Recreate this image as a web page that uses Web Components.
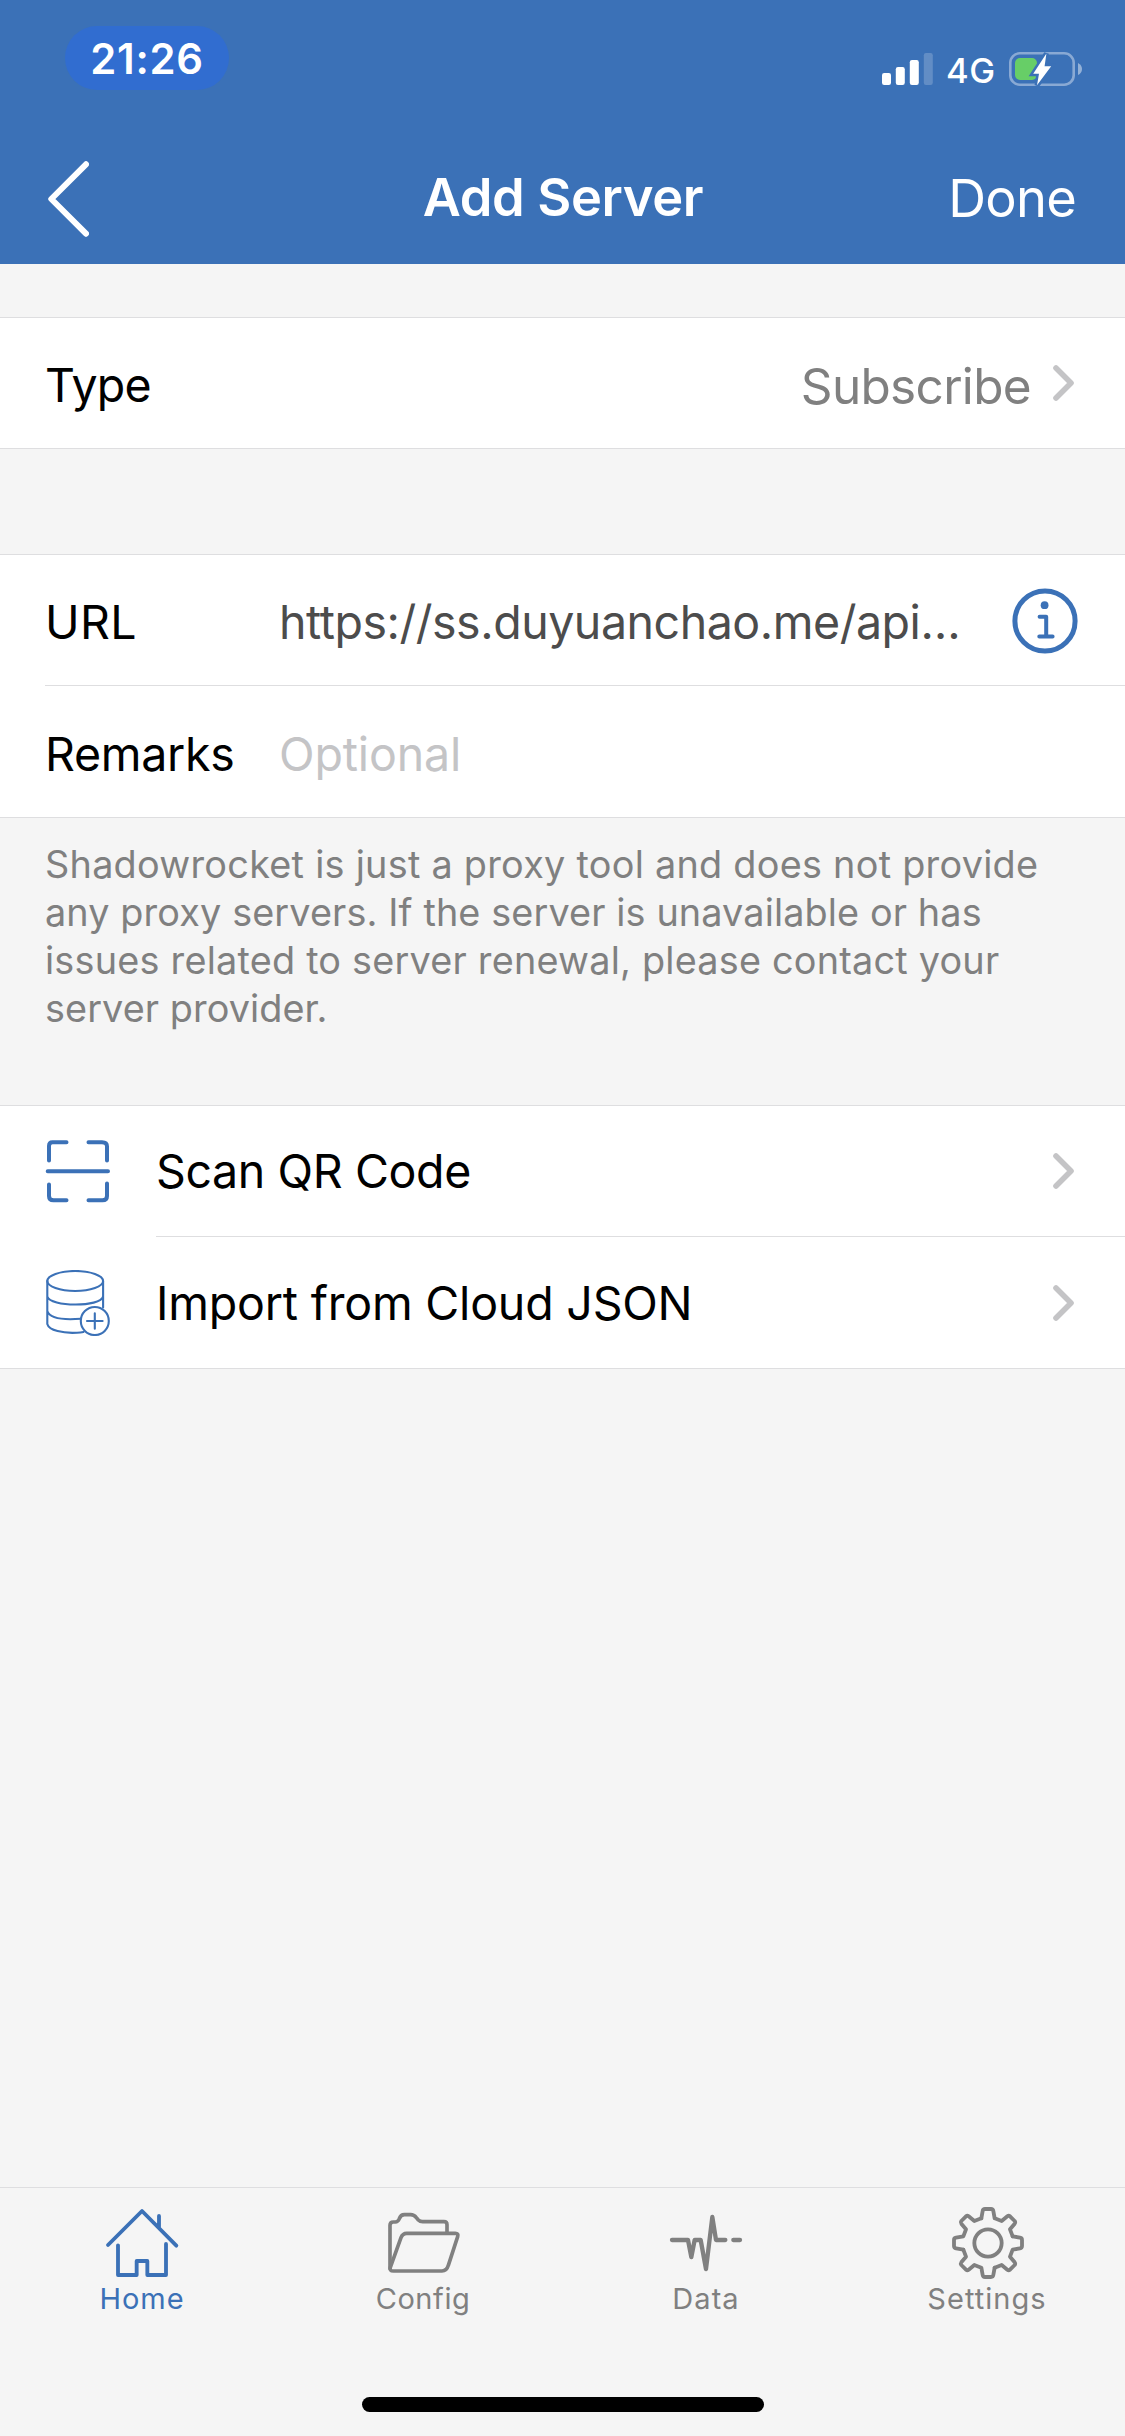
<!DOCTYPE html>
<html lang="en">
<head>
<meta charset="utf-8">
<title>Add Server</title>
<style>
  html, body { margin: 0; height: 2436px; }
  body {
    width: 1125px; overflow: hidden; background: #f5f5f5;
    font-family: Inter, "Liberation Sans", sans-serif; color: #000;
    --accent: #3b71b7; --muted: #808080; --line: #dedee0;
  }
</style>
</head>
<body>
<app-screen></app-screen>
<script>
const define = (name, html) => customElements.define(name, class extends HTMLElement {
  constructor() {
    super();
    this.attachShadow({ mode: 'open' }).innerHTML = html;
  }
});

/* Text with its own tracking: <t-x ls="-0.4">…</t-x> */
customElements.define('t-x', class extends HTMLElement {
  constructor() {
    super();
    this.attachShadow({ mode: 'open' }).innerHTML =
      '<style>:host{display:block;white-space:nowrap}</style><slot></slot>';
  }
  connectedCallback() { this.style.letterSpacing = (this.getAttribute('ls') || 0) + 'px'; }
});

const tooth = 'M-20 -74L-16 -96Q-15 -102 -9 -102H9Q15 -102 16 -96L20 -74L41 -66L58 -80Q62 -83 66 -80L80 -66Q83 -62 80 -58L66 -41L74 -20';
const icons = {
  back: `<svg width="41" height="76" viewBox="0 0 41 76"><path d="M38 3.3L3.3 38L38 72.7" stroke-width="6"/></svg>`,
  chevron: `<svg width="21" height="36" viewBox="0 0 21 36"><path d="M3 3L18 18L3 33" stroke-width="5.6"/></svg>`,
  signal: `<svg width="51" height="32" viewBox="0 0 51 32"><g fill="#fff" stroke="none"><rect y="20" width="9" height="12" rx="2.2"/><rect x="13.8" y="14" width="9" height="18" rx="2.2"/><rect x="27.8" y="7" width="9" height="25" rx="2.2"/><rect x="41.8" width="9" height="32" rx="2.2" opacity=".2"/></g></svg>`,
  battery: `<svg width="73" height="34" viewBox="0 0 73 34"><rect x="1.3" y="1.3" width="63.4" height="31.4" rx="9.5" stroke="#fff" stroke-opacity=".4" stroke-width="2.6"/><path d="M69 11Q73 13 73 17T69 23Z" fill="#fff" fill-opacity=".45" stroke="none"/><rect x="6" y="6" width="22" height="22" rx="5" fill="#67ce67" stroke="none"/><path d="M37.4 1.5L24.2 21.7H30L28 33.3L42.2 14.3H35.6Z" fill="#fff" stroke="#3b71b7" stroke-width="5" stroke-linejoin="miter" paint-order="stroke"/></svg>`,
  info: `<svg width="66" height="66" viewBox="0 0 66 66"><circle cx="33" cy="33" r="30.1" stroke-width="5"/><circle cx="32.6" cy="17.2" r="3.9" fill="currentColor" stroke="none"/><path d="M27.6 28.8H34.2V48.6M27.3 48.6H40.6" stroke-width="4"/></svg>`,
  scan: `<svg width="65" height="63" viewBox="0 0 65 63"><g stroke-width="4"><path d="M4 20.5V6Q4 2.3 7.5 2.3H21.5M43.5 2.3H57Q62 2.3 62 6.5V20.5M62 43.5V56Q62 60.3 57.5 60.3H43.5M21.5 60.3H8.5Q4 60.3 4 56V44.5M2.7 31.3H63"/></g></svg>`,
  database: `<svg width="65" height="66" viewBox="0 0 65 66"><g stroke-width="2.1"><ellipse cx="30.2" cy="11" rx="27.9" ry="10"/><path d="M2.3 11V54C4 60.500 18 63.500 32 62.700Q35.500 62.600 38.500 62M58.100 11V37.500M2.300 26.500C5 37 55.500 37.500 58.100 26.500M2.300 41C5 49 20 50 36 48.700"/><circle cx="49.800" cy="51" r="14"/><path d="M42 51H57.600M49.800 43.200V58.800"/></g></svg>`,
  home: `<svg width="84" height="80" viewBox="117 60 252 240"><g stroke-width="11.5"><path d="M144 195L246 93L349 197M297 108V144M174 196V285H230V243H262V285H318V192"/></g></svg>`,
  config: `<svg width="84" height="80" viewBox="963 60 252 240"><g stroke-width="11"><path d="M990 266V136Q990 126 1000 126H1006Q1014 126 1018 116Q1022 104 1033 104H1052Q1062 104 1069 113L1075 120Q1080 125 1088 125H1152Q1161 125 1161 134V158"/><path d="M1040 160H1186Q1196 160 1193 170L1165 256Q1160 273 1146 273H1000Q988 273 991 262L1023 173Q1028 160 1040 160Z"/></g></svg>`,
  data: `<svg width="84" height="80" viewBox="129 60 252 240"><g stroke-width="13"><path d="M156 180H204L214 231L224 180H242L258 267L277 111L288 180H316M340 180H360"/></g></svg>`,
  settings: `<svg width="84" height="80" viewBox="975 60 252 240"><g stroke-width="11.500" transform="translate(1104 189)"><circle r="41"/>${[0, 90, 180, 270].map(a => `<path d="${tooth}" transform="rotate(${a})"/>`).join('')}</g></svg>`
};

customElements.define('ui-icon', class extends HTMLElement {
  connectedCallback() {
    this.attachShadow({ mode: 'open' }).innerHTML =
      `<style>:host{display:block;flex:none}svg{display:block;fill:none;stroke:currentColor;stroke-linecap:round;stroke-linejoin:round}</style>${icons[this.getAttribute('name')]}`;
  }
});

define('status-bar', `
<style>
  :host { display: flex; justify-content: space-between; height: 132px; box-sizing: border-box; padding: 26px 43px 0 65px; }
  .time { width: 164px; height: 64px; border-radius: 32px; background: #316dd0; display: flex; justify-content: center;
          font-size: 41.8px; font-weight: 600; line-height: 66px; }
  .right { display: flex; height: 34px; margin-top: 26px; }
  .net { font-size: 34.6px; font-weight: 500; line-height: 36px; margin: 0 13.500px 0 12.500px; }
  .sig { margin-top: 1px; }
</style>
<div class="time"><t-x ls="0.73">21:26</t-x></div>
<div class="right"><ui-icon class="sig" name="signal"></ui-icon><t-x class="net" ls="0.5">4G</t-x><ui-icon name="battery"></ui-icon></div>`);

define('nav-bar', `
<style>
  :host { display: grid; grid-template-columns: 1fr auto 1fr; align-items: center; height: 132px; box-sizing: border-box;
          padding: 0 49px 0 48px; font-size: 52.4px; line-height: 132px; }
  .back { margin-top: 1px; }
  .title { font-weight: 600; margin: -2px -1px 0 1px; }
  .done { justify-self: end; }
</style>
<ui-icon class="back" name="back"></ui-icon>
<t-x class="title" ls="-0.37"><slot name="title"></slot></t-x>
<t-x class="done" ls="-0.73"><slot name="action"></slot></t-x>`);

define('list-group', `
<style>
  :host { display: flex; flex-direction: column; background: #fff; box-shadow: inset 0 1px var(--line), inset 0 -1px var(--line); }
</style><slot></slot>`);

define('list-row', `
<style>
  :host { display: flex; align-items: center; height: 132px; box-sizing: border-box; padding: 0 51px 0 45px;
          font-size: 46.5px; line-height: 60px;
          background: linear-gradient(var(--line), var(--line)) right bottom / calc(100% - var(--inset, 0px)) 1px no-repeat; }
  .label { width: var(--label, auto); flex: none; }
  .value { flex: 1; display: flex; min-width: 0; }
</style>
<slot name="icon"></slot>
<div class="label"><slot name="label"></slot></div>
<div class="value"><slot></slot></div>
<slot name="end"></slot>`);

define('tab-item', `
<style>
  :host { display: flex; flex-direction: column; align-items: center; width: 282px; flex: none; color: var(--muted);
          font-size: 29px; line-height: 38px; }
  :host([active]) { color: var(--accent); }
</style><slot name="icon"></slot><slot></slot>`);

define('tab-bar', `
<style>
  :host { display: flex; height: 210px; box-sizing: border-box; padding-top: 12px; border-top: 1px solid var(--line); background: #f5f5f5; }
</style><slot></slot>`);

define('home-indicator', `
<style>:host { display: flex; justify-content: center; height: 39px; }
i { width: 402px; height: 15px; border-radius: 8px; background: #000; }</style><i></i>`);

define('app-screen', `
<style>
  :host { display: flex; flex-direction: column; height: 2436px; }
  header { background: var(--accent); color: #fff; height: 264px; flex: none; }
  main { flex: 1; display: flex; flex-direction: column; }
  .g1 { margin-top: 53px; }
  .g2 { margin-top: 105px; --label: 234px; }
  .g3 { margin-top: 48px; }
  .g1 t-x[slot=label], .g2 t-x { padding-top: 4px; }
  .sub { margin-left: auto; margin-right: 22px; padding-top: 6px; font-size: 49.5px; color: var(--muted); }
  .chev { color: #c4c4c6; }
  .url { color: #4c4c4c; }
  .opt { color: #c4c4c6; }
  .info { color: var(--accent); margin: 1px -4px 0 0; }
  .lead { color: var(--accent); margin-right: 47px; }
  .note { margin: 22px 0 0 45px; color: var(--muted); font-size: 37.8px; line-height: 48px; height: 217px; }
</style>
<header>
  <status-bar></status-bar>
  <nav-bar><span slot="title">Add Server</span><span slot="action">Done</span></nav-bar>
</header>
<main>
  <list-group class="g1">
    <list-row><t-x slot="label" ls="-0.7">Type</t-x><t-x class="sub" ls="-0.68">Subscribe</t-x><ui-icon slot="end" class="chev" name="chevron"></ui-icon></list-row>
  </list-group>
  <list-group class="g2">
    <list-row style="--inset:45px"><t-x slot="label" ls="0.4">URL</t-x><t-x class="url" ls="-0.46">https://ss.duyuanchao.me/api…</t-x><ui-icon slot="end" class="info" name="info"></ui-icon></list-row>
    <list-row><t-x slot="label" ls="-0.3">Remarks</t-x><t-x class="opt" ls="-0.14">Optional</t-x></list-row>
  </list-group>
  <div class="note">
    <t-x ls="0.267">Shadowrocket is just a proxy tool and does not provide</t-x>
    <t-x ls="0.12">any proxy servers. If the server is unavailable or has</t-x>
    <t-x ls="0.22">issues related to server renewal, please contact your</t-x>
    <t-x ls="0.08">server provider.</t-x>
  </div>
  <list-group class="g3">
    <list-row style="--inset:156px"><ui-icon slot="icon" class="lead" name="scan"></ui-icon><t-x slot="label" ls="-0.38" style="margin-left:-1px">Scan QR Code</t-x><ui-icon slot="end" class="chev" name="chevron"></ui-icon></list-row>
    <list-row><ui-icon slot="icon" class="lead" name="database"></ui-icon><t-x slot="label" ls="-0.2" style="margin-left:-1px">Import from Cloud JSON</t-x><ui-icon slot="end" class="chev" name="chevron"></ui-icon></list-row>
  </list-group>
</main>
<tab-bar>
  <tab-item active><ui-icon slot="icon" name="home"></ui-icon><t-x ls="0.98" style="margin-left:2px">Home</t-x></tab-item>
  <tab-item><ui-icon slot="icon" name="config"></ui-icon><t-x ls="0.57">Config</t-x></tab-item>
  <tab-item><ui-icon slot="icon" name="data"></ui-icon><t-x ls="1.05" style="margin-left:2px">Data</t-x></tab-item>
  <tab-item><ui-icon slot="icon" name="settings"></ui-icon><t-x ls="1.04">Settings</t-x></tab-item>
</tab-bar>
<home-indicator></home-indicator>`);
</script>
</body>
</html>
